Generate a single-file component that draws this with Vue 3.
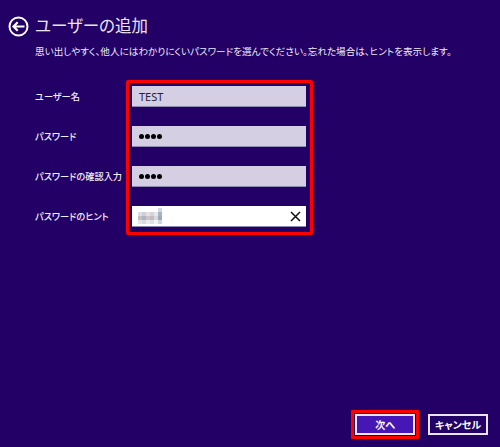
<script setup>
const fields = [
  { label: 'ユーザー名', value: 'TEST', kind: 'text' },
  { label: 'パスワード', value: '●●●●', kind: 'pass' },
  { label: 'パスワードの確認入力', value: '●●●●', kind: 'pass' },
  { label: 'パスワードのヒント', value: '', kind: 'hint' },
]
const blur = [
  '#fff','#fff','#fff','#fff','#fff','#d4d8de',
  '#dcdce2','#cfcfd6','#e6e0e2','#d9d2d6','#e6e8ee','#a9b2c0',
  '#c0c0c8','#b4b4be','#cdc4c8','#c0bcc4','#d5d9e0','#9daab8',
  '#e6e6ea','#dadae0','#ecebed','#e0dfe4','#f2f3f5','#d0d6de',
]
</script>

<template>
  <div class="page">
    <header class="head">
      <svg class="back" width="21" height="21" viewBox="0 0 21 21" aria-hidden="true">
        <circle cx="10.5" cy="10.5" r="9" fill="none" stroke="#fff" stroke-width="2" />
        <path d="M5.5 10.5H16.5M9.7 6.3l-4.2 4.2 4.2 4.2" fill="none" stroke="#fff" stroke-width="2.2" />
      </svg>
      <h1 class="title">ユーザーの追加</h1>
    </header>
    <p class="desc">思い出しやすく、他人にはわかりにくいパスワードを選んでください。忘れた場合は、ヒントを表示します。</p>

    <div class="form">
      <div class="labels">
        <div v-for="f in fields" :key="f.label" class="label">{{ f.label }}</div>
      </div>
      <div class="redbox">
        <div v-for="f in fields" :key="f.label" class="input" :class="f.kind">
          <span v-if="f.kind === 'text'" class="val">{{ f.value }}</span>
          <span v-else-if="f.kind === 'pass'" class="dots"><i v-for="n in 4" :key="n"></i></span>
          <template v-else>
            <span class="mosaic"><i v-for="(c, i) in blur" :key="i" :style="{ background: c }"></i></span>
            <svg class="clear" width="11" height="11" viewBox="0 0 11 11" aria-hidden="true">
              <path d="M1 1L10 10M10 1L1 10" stroke="#111" stroke-width="1.5" fill="none" />
            </svg>
          </template>
        </div>
      </div>
    </div>

    <footer class="foot">
      <div class="nextwrap"><button class="btn next">次へ</button></div>
      <button class="btn cancel">キャンセル</button>
    </footer>
  </div>
</template>

<style>
html, body { margin: 0; background: #220066; }
</style>

<style scoped>
.page {
  width: 500px;
  height: 447px;
  box-sizing: border-box;
  background: #220066;
  color: #fff;
  font-family: "Noto Sans CJK JP", "Noto Sans", sans-serif;
  font-feature-settings: "palt";
  display: flex;
  flex-direction: column;
  position: relative;
  padding: 16px 0 0 8px;
  overflow: hidden;
}
.head { display: flex; align-items: center; gap: 6px; height: 21px; }
.back { flex: none; }
.title { margin: 0 0 3px; font-size: 16.5px; font-weight: 400; line-height: 21px; color: #e8e4f2; }
.desc { margin: 7px 0 0 27px; font-size: 9.6px; line-height: 14px; color: #eeeaf6; white-space: nowrap; }
.form { display: flex; margin-top: 22px; margin-left: 27px; }
.labels { width: 91px; padding-top: 6px; }
.label { height: 21px; margin-bottom: 19px; font-size: 9.2px; font-weight: 500; line-height: 21px; color: #f0edf7; white-space: nowrap; }
.redbox {
  width: 187px;
  height: 155px;
  box-sizing: border-box;
  border: 3px solid #f00;
  border-radius: 2px;
  padding: 3px;
  display: flex;
  flex-direction: column;
  gap: 19px;
}
.input {
  width: 174px;
  height: 21px;
  box-sizing: border-box;
  background: #d4cfe2;
  border-bottom: 1px solid #8f88b0;
  display: flex;
  align-items: center;
  padding: 0 7px;
  color: #223;
  font-size: 11px;
}
.val { font-family: "Noto Sans", sans-serif; }
.dots { display: flex; gap: 1px; }
.dots i { width: 5px; height: 5px; border-radius: 50%; background: #000; display: block; }
.hint { background: #fff; justify-content: space-between; padding: 0 5px 0 6px; }
.mosaic { display: grid; grid-template-columns: repeat(6, 4px); grid-auto-rows: 4px; }
.mosaic i { display: block; }
.clear { flex: none; }
.foot {
  position: absolute;
  right: 12px;
  bottom: 8px;
  display: flex;
  align-items: center;
  gap: 9px;
}
.nextwrap { border: 3px solid #f00; border-radius: 1px; padding: 1px; line-height: 0; }
.btn {
  box-sizing: border-box;
  height: 21px;
  border: 2px solid #e8e4f2;
  color: #fff;
  font-family: inherit;
  font-feature-settings: "palt";
  font-size: 10px;
  font-weight: 700;
  padding: 0;
  line-height: 16px;
  display: block;
}
.next { width: 60px; background: #4617b4; }
.cancel { width: 60px; background: #220066; }
</style>
